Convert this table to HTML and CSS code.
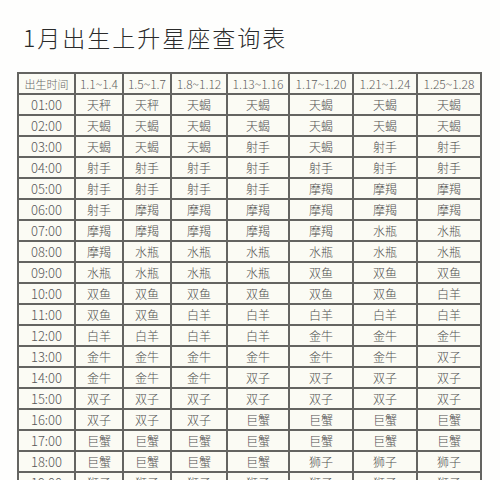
FILE: index.html
```html
<!DOCTYPE html>
<html lang="zh-CN">
<head>
<meta charset="utf-8">
<title>1月出生上升星座查询表</title>
<link rel="stylesheet" href="styles.css">
</head>
<body>
<h1 class="title">1月出生上升星座查询表</h1>
<table class="chart">
<colgroup>
<col class="c-time"><col class="c-a"><col class="c-b"><col class="c-c"><col class="c-d"><col class="c-e"><col class="c-f"><col class="c-g">
</colgroup>
<thead>
<tr><th class="lbl">出生时间</th><th>1.1~1.4</th><th>1.5~1.7</th><th>1.8~1.12</th><th>1.13~1.16</th><th>1.17~1.20</th><th>1.21~1.24</th><th>1.25~1.28</th></tr>
</thead>
<tbody>
<tr><td class="t">01:00</td><td>天秤</td><td>天秤</td><td>天蝎</td><td>天蝎</td><td>天蝎</td><td>天蝎</td><td>天蝎</td></tr>
<tr><td class="t">02:00</td><td>天蝎</td><td>天蝎</td><td>天蝎</td><td>天蝎</td><td>天蝎</td><td>天蝎</td><td>天蝎</td></tr>
<tr><td class="t">03:00</td><td>天蝎</td><td>天蝎</td><td>天蝎</td><td>射手</td><td>天蝎</td><td>射手</td><td>射手</td></tr>
<tr><td class="t">04:00</td><td>射手</td><td>射手</td><td>射手</td><td>射手</td><td>射手</td><td>射手</td><td>射手</td></tr>
<tr><td class="t">05:00</td><td>射手</td><td>射手</td><td>射手</td><td>射手</td><td>摩羯</td><td>摩羯</td><td>摩羯</td></tr>
<tr><td class="t">06:00</td><td>射手</td><td>摩羯</td><td>摩羯</td><td>摩羯</td><td>摩羯</td><td>摩羯</td><td>摩羯</td></tr>
<tr><td class="t">07:00</td><td>摩羯</td><td>摩羯</td><td>摩羯</td><td>摩羯</td><td>摩羯</td><td>水瓶</td><td>水瓶</td></tr>
<tr><td class="t">08:00</td><td>摩羯</td><td>水瓶</td><td>水瓶</td><td>水瓶</td><td>水瓶</td><td>水瓶</td><td>水瓶</td></tr>
<tr><td class="t">09:00</td><td>水瓶</td><td>水瓶</td><td>水瓶</td><td>水瓶</td><td>双鱼</td><td>双鱼</td><td>双鱼</td></tr>
<tr><td class="t">10:00</td><td>双鱼</td><td>双鱼</td><td>双鱼</td><td>双鱼</td><td>双鱼</td><td>双鱼</td><td>白羊</td></tr>
<tr><td class="t">11:00</td><td>双鱼</td><td>双鱼</td><td>白羊</td><td>白羊</td><td>白羊</td><td>白羊</td><td>白羊</td></tr>
<tr><td class="t">12:00</td><td>白羊</td><td>白羊</td><td>白羊</td><td>白羊</td><td>金牛</td><td>金牛</td><td>金牛</td></tr>
<tr><td class="t">13:00</td><td>金牛</td><td>金牛</td><td>金牛</td><td>金牛</td><td>金牛</td><td>金牛</td><td>双子</td></tr>
<tr><td class="t">14:00</td><td>金牛</td><td>金牛</td><td>金牛</td><td>双子</td><td>双子</td><td>双子</td><td>双子</td></tr>
<tr><td class="t">15:00</td><td>双子</td><td>双子</td><td>双子</td><td>双子</td><td>双子</td><td>双子</td><td>双子</td></tr>
<tr><td class="t">16:00</td><td>双子</td><td>双子</td><td>双子</td><td>巨蟹</td><td>巨蟹</td><td>巨蟹</td><td>巨蟹</td></tr>
<tr><td class="t">17:00</td><td>巨蟹</td><td>巨蟹</td><td>巨蟹</td><td>巨蟹</td><td>巨蟹</td><td>巨蟹</td><td>巨蟹</td></tr>
<tr><td class="t">18:00</td><td>巨蟹</td><td>巨蟹</td><td>巨蟹</td><td>巨蟹</td><td>狮子</td><td>狮子</td><td>狮子</td></tr>
<tr><td class="t">19:00</td><td>狮子</td><td>狮子</td><td>狮子</td><td>狮子</td><td>狮子</td><td>狮子</td><td>狮子</td></tr>
</tbody>
</table>
</body>
</html>
```

FILE: styles.css
```css
html, body {
  margin: 0;
  padding: 0;
  background: #fefefd;
}
body {
  font-family: "Noto Sans CJK SC", "Noto Sans", sans-serif;
  color: #555;
  overflow: hidden;
  height: 480px;
}
.title {
  margin: 0;
  padding: 23px 0 0 23px;
  font-size: 23px;
  line-height: 28px;
  font-weight: 300;
  letter-spacing: 2px;
  color: #2b2b2b;
}
.chart {
  margin: 21px 0 0 17px;
  border-collapse: collapse;
  table-layout: fixed;
  width: 464px;
  background: #fbfbf4;
}
.c-time { width: 57px; }
.c-a, .c-b { width: 48px; }
.c-c { width: 56px; }
.c-d { width: 62px; }
.c-e, .c-f, .c-g { width: 64px; }
.chart th, .chart td {
  border: 2px solid #646461;
  padding: 0;
  height: 19px;
  text-align: center;
  vertical-align: middle;
  line-height: 18px;
  white-space: nowrap;
  overflow: hidden;
}
.chart th {
  font-weight: 300;
  font-size: 12px;
  color: #5e5e5e;
}
.chart th.lbl {
  font-size: 11px;
  color: #6a6a6a;
}
.chart td {
  font-size: 12px;
  font-weight: 300;
  color: #505050;
}
.chart td.t {
  font-size: 13px;
  color: #585858;
}
```
